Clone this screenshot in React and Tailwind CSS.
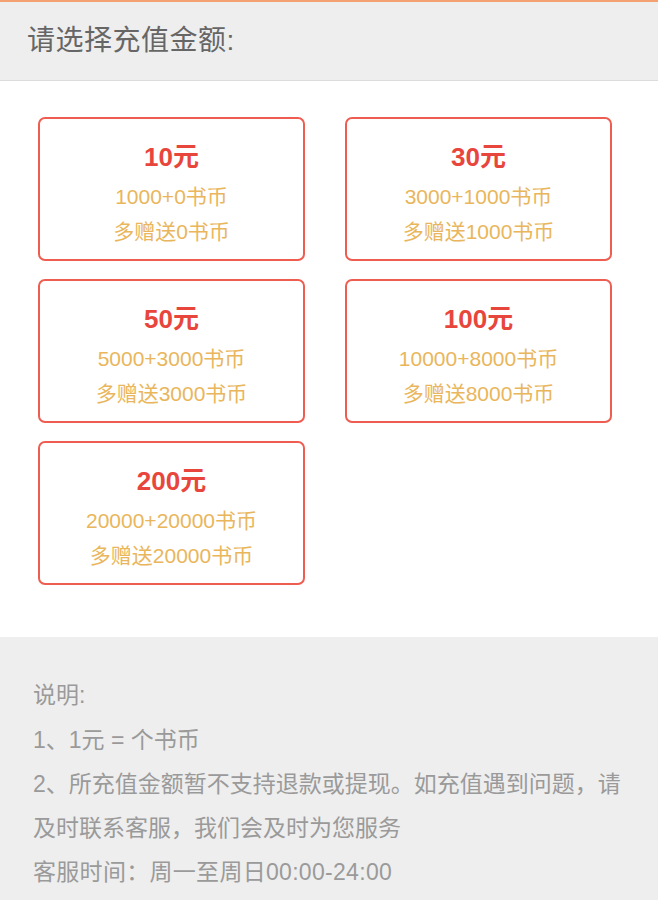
import React from 'react';

const options = [
  { price: '10元', coins: '1000+0书币', bonus: '多赠送0书币' },
  { price: '30元', coins: '3000+1000书币', bonus: '多赠送1000书币' },
  { price: '50元', coins: '5000+3000书币', bonus: '多赠送3000书币' },
  { price: '100元', coins: '10000+8000书币', bonus: '多赠送8000书币' },
  { price: '200元', coins: '20000+20000书币', bonus: '多赠送20000书币' },
];

const RechargePage = () => {
  return (
    <div
      className="min-h-[900px] bg-[#eeeeee]"
      style={{ fontFamily: '"Liberation Sans", "Noto Sans CJK SC", sans-serif' }}
    >
      {/* header */}
      <div className="border-t-2 border-[#f5a070] border-b border-b-[#dcdcdc] h-[81px] flex items-center px-[27px]">
        <h1 className="text-[28px] tracking-[0.5px] text-[#666666] font-normal">请选择充值金额:</h1>
      </div>

      {/* options */}
      <div className="bg-white pl-[38px] pr-[46px] pt-[36px] pb-[52px] grid grid-cols-2 gap-x-[40px] gap-y-[18px]">
        {options.map((o) => (
          <div
            key={o.price}
            className="h-[144px] border-2 border-[#ef5c50] rounded-[7px] flex flex-col items-center pt-[20px]"
          >
            <div className="text-[26px] leading-[36px] font-bold text-[#e8463c]">{o.price}</div>
            <div className="text-[21px] leading-[35px] mt-[4px] text-[#e9b65c]">{o.coins}</div>
            <div className="text-[21px] leading-[35px] text-[#e9b65c]">{o.bonus}</div>
          </div>
        ))}
      </div>

      {/* notes */}
      <div className="px-[33px] pt-[36px] pb-[10px] text-[23px] leading-[44px] text-[#9a9a9a]">
        <p className="mb-[1px]">说明:</p>
        <p>1、1元 = 个书币</p>
        <p>2、所充值金额暂不支持退款或提现。如充值遇到问题，请及时联系客服，我们会及时为您服务</p>
        <p className="tracking-[0.3px]">客服时间：周一至周日00:00-24:00</p>
      </div>
    </div>
  );
};

export default RechargePage;
